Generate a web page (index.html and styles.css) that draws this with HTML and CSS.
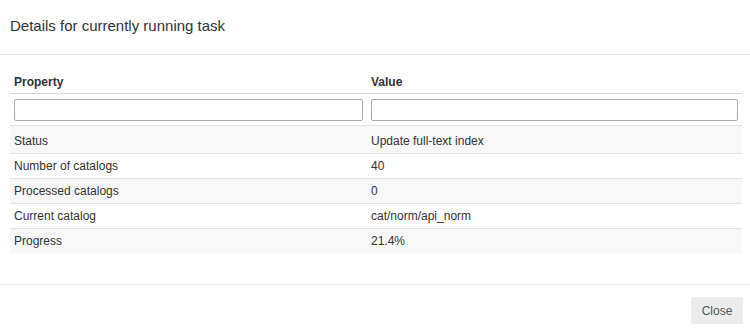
FILE: index.html
```html
<!DOCTYPE html>
<html>
<head>
  <title>Running task</title>
  <link rel="stylesheet" href="styles.css">
</head>
<body>

  <div class="modal">
    <div class="modal-header">
      <h4 class="modal-title">Details for currently running task</h4>
    </div>

    <div class="modal-body">
      <table class="details">
        <colgroup>
          <col class="col-property">
          <col class="col-value">
        </colgroup>
        <thead>
          <tr>
            <th>Property</th>
            <th>Value</th>
          </tr>
          <tr class="filters">
            <td><input type="text" /></td>
            <td><input type="text" /></td>
          </tr>
        </thead>
        <tbody>
          <tr><td>Status</td><td>Update full-text index</td></tr>
          <tr><td>Number of catalogs</td><td>40</td></tr>
          <tr><td>Processed catalogs</td><td>0</td></tr>
          <tr><td>Current catalog</td><td>cat/norm/api_norm</td></tr>
          <tr><td>Progress</td><td>21.4%</td></tr>
        </tbody>
      </table>
    </div>

    <div class="modal-footer">
      <button type="button" class="btn">Close</button>
    </div>
  </div>

</body>
</html>
```

FILE: styles.css
```css
body {
  margin: 0;
  background: #ffffff;
  font-family: "Liberation Sans", Arial, sans-serif;
  font-size: 12px;
  color: #333333;
}

.modal {
  width: 750px;
  height: 334px;
  background: #ffffff;
}

.modal-header {
  padding: 13px 10px 16px;
  border-bottom: 1px solid #e8e8e8;
}

.modal-title {
  margin: 0;
  font-size: 15px;
  font-weight: normal;
  line-height: 25px;
  color: #333333;
}

.modal-body {
  padding: 13px 8px 31px 10px;
}

.details {
  width: 732px;
  border-collapse: collapse;
  table-layout: fixed;
}

.col-property {
  width: 357px;
}

.col-value {
  width: 375px;
}

.details th,
.details td {
  padding: 5px 4px 4px;
  line-height: 15px;
  text-align: left;
  border-bottom: 1px solid #e2e2e2;
}

.details th {
  padding: 7px 4px 3px;
  font-weight: bold;
  color: #333333;
  border-bottom-color: #d8d8d8;
}

.details .filters td {
  padding: 5px 4px 4px;
  line-height: 0;
}

.details input {
  box-sizing: border-box;
  width: 100%;
  height: 22px;
  margin: 0;
  border: 1px solid #a9a9a9;
  border-radius: 2px;
  background: #ffffff;
}

.details tbody tr:first-child td {
  padding-top: 8px;
}

.details tbody tr:nth-child(odd) {
  background: #f8f8f8;
}

.details tbody tr:last-child td {
  border-bottom: none;
}

.modal-footer {
  display: flex;
  justify-content: flex-end;
  padding: 12px 7px 10px;
  border-top: 1px solid #ebebeb;
}

.btn {
  width: 52px;
  height: 27px;
  padding: 0;
  border: none;
  border-radius: 2px;
  background: #ececec;
  color: #555555;
  font-family: "Liberation Sans", Arial, sans-serif;
  font-size: 12px;
  cursor: pointer;
}

.btn:hover {
  background: #e0e0e0;
}
```
